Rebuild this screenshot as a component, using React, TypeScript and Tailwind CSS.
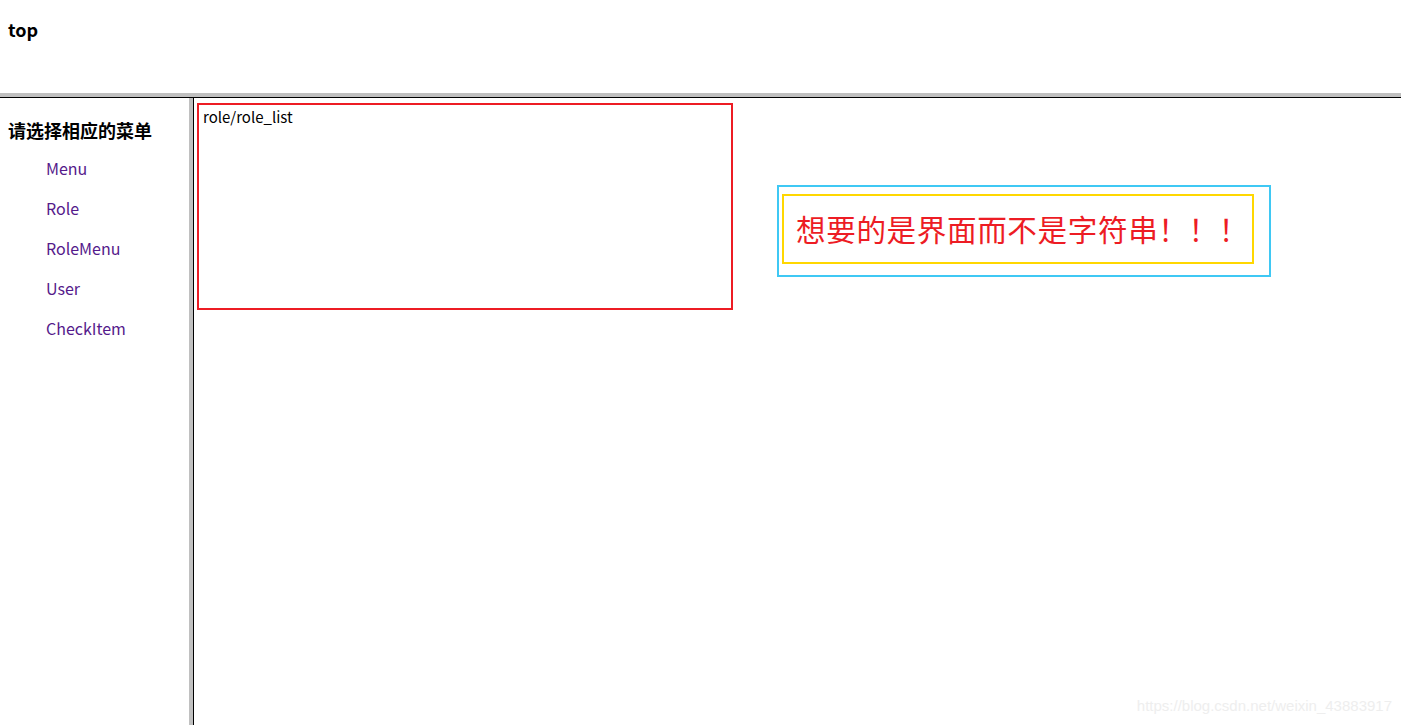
const font = "font-['Noto_Sans_CJK_SC','Microsoft_YaHei',sans-serif]";

const menus = ["Menu", "Role", "RoleMenu", "User", "CheckItem"];

export default function App() {
  return (
    <div className={`relative flex h-[725px] flex-col overflow-hidden bg-white text-black ${font}`}>
      <header className="h-[93px] shrink-0 pl-[8px] pt-[17px]">
        <h1 className="text-[18px] font-bold leading-[24px]">top</h1>
      </header>

      <div className="flex flex-1 border-t-[4px] border-[#c0c0c0]">
        <div className="flex flex-1 border-t border-black">
          <aside className="w-[193px] shrink-0 border-r-[4px] border-[#c0c0c0] pt-[20px]">
            <h2 className="pl-[8px] text-[18px] font-bold leading-[24px]">请选择相应的菜单</h2>
            <ul className="mt-[6px] pl-[46px]">
              {menus.map((m) => (
                <li key={m}>
                  <a href="#" className="text-[16px] leading-[40px] text-[#551a8b]">
                    {m}
                  </a>
                </li>
              ))}
            </ul>
          </aside>

          <main className="flex flex-1 items-start border-l border-black pl-[3px] pt-[5px]">
            <div className="h-[207px] w-[536px] border-2 border-[#ed1c24] pl-[4px] pt-[2px]">
              <p className="text-[15px] leading-[20px]">role/role_list</p>
            </div>

            <div className="ml-[44px] mt-[82px] h-[92px] w-[494px] border-2 border-[#3fc8f4] pl-[3px] pt-[7px]">
              <div className="flex h-[70px] w-[472px] items-center border-2 border-[#ffd700] pl-[12px]">
                <span className="whitespace-nowrap text-[29.6px] leading-none tracking-[0.6px] text-[#ed1c24]">
                  想要的是界面而不是字符串！！！
                </span>
              </div>
            </div>
          </main>
        </div>
      </div>

      <span className="absolute bottom-[8px] right-[9px] font-['Liberation_Sans',sans-serif] text-[15px] text-[#eeeeee]">
        https://blog.csdn.net/weixin_43883917
      </span>
    </div>
  );
}
